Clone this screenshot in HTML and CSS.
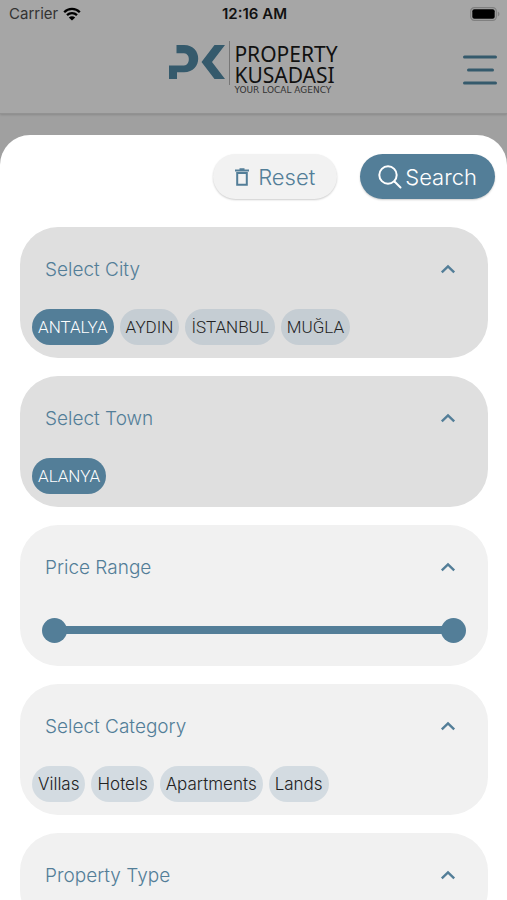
FILE: index.html
```html
<!DOCTYPE html>
<html lang="en">
<head>
<meta charset="utf-8">
<meta name="viewport" content="width=device-width, initial-scale=1">
<title>Property Kusadasi</title>
<link rel="stylesheet" href="styles.css">
</head>
<body>
<header class="top">
  <div class="status">
    <span class="carrier">Carrier
      <svg class="wifi" viewBox="0 0 18 14" aria-hidden="true"><path d="M1.2 5.2C5.500 .8 12.500 .8 16.800 5.200M4 8.200c2.900-2.800 7.100-2.800 10 0" fill="none" stroke="currentColor" stroke-width="2.300"/><path d="M9 13.600 5.800 10.400c1.800-1.700 4.600-1.700 6.400 0z" fill="currentColor"/></svg>
    </span>
    <span class="clock">12:16 AM</span>
    <svg class="battery" viewBox="0 0 30 14" aria-hidden="true"><rect x=".7" y=".7" width="25.600" height="12.600" rx="3.600" fill="none" stroke="#808080" stroke-width="1.200"/><rect x="2.300" y="2.300" width="22.400" height="9.400" rx="2" fill="#000"/><path d="M27.800 4.500v5c2.200-1 2.200-4 0-5z" fill="#808080"/></svg>
  </div>
  <div class="bar">
    <a class="logo" href="#">
      <svg class="mark" viewBox="0 0 56 36" aria-hidden="true"><path d="M7.500 1H15C34 1 34 28.300 15 28.300H8V35H0V21.500H15C21.500 21.500 21.500 9.300 15 9.300H7.500z"/><path d="M45.500 1H56L43 18l13 17H45.500L32.500 18z"/></svg>
      <span class="words">
        <span class="name">PROPERTY</span>
        <span class="name">KUSADASI</span>
        <span class="tag">YOUR LOCAL AGENCY</span>
      </span>
    </a>
    <button class="menu" aria-label="Menu"><svg viewBox="0 0 34 30" aria-hidden="true"><path d="M1.500 2h31M5.500 15h24M1.500 28h31"/></svg></button>
  </div>
</header>
<main class="sheet">
  <div class="actions">
    <button class="pill reset"><svg class="trash" viewBox="0 0 14 18" aria-hidden="true"><path d="M2.200 5v11.700h9.600V5zM0 2.500h14M4.500 1.200h5" /></svg>Reset</button>
    <button class="pill search"><svg class="lens" viewBox="0 0 24 24" aria-hidden="true"><circle cx="10" cy="10" r="8.700"/><path d="m16.500 16.500 6 6"/></svg>Search</button>
  </div>
  <section class="card chosen">
    <button class="head" aria-expanded="true">Select City<svg class="chevron" viewBox="0 0 16 10" aria-hidden="true"><path d="m1.800 8.300 6.200-6 6.200 6"/></svg></button>
    <div class="chips"><button class="chip on">ANTALYA</button><button class="chip">AYDIN</button><button class="chip">İSTANBUL</button><button class="chip">MUĞLA</button></div>
  </section>
  <section class="card chosen">
    <button class="head" aria-expanded="true">Select Town<svg class="chevron" viewBox="0 0 16 10" aria-hidden="true"><path d="m1.800 8.300 6.200-6 6.200 6"/></svg></button>
    <div class="chips"><button class="chip on">ALANYA</button></div>
  </section>
  <section class="card">
    <button class="head" aria-expanded="true">Price Range<svg class="chevron" viewBox="0 0 16 10" aria-hidden="true"><path d="m1.800 8.300 6.200-6 6.200 6"/></svg></button>
    <div class="range">
      <input type="range" min="0" max="100" value="0" aria-label="Minimum price">
      <input type="range" min="0" max="100" value="100" aria-label="Maximum price">
    </div>
  </section>
  <section class="card">
    <button class="head" aria-expanded="true">Select Category<svg class="chevron" viewBox="0 0 16 10" aria-hidden="true"><path d="m1.800 8.300 6.200-6 6.200 6"/></svg></button>
    <div class="chips"><button class="chip">Villas</button><button class="chip">Hotels</button><button class="chip">Apartments</button><button class="chip">Lands</button></div>
  </section>
  <section class="card">
    <button class="head" aria-expanded="true">Property Type<svg class="chevron" viewBox="0 0 16 10" aria-hidden="true"><path d="m1.800 8.300 6.200-6 6.200 6"/></svg></button>
  </section>
</main>
</body>
</html>
```
FILE: styles.css
```css
* { box-sizing: border-box; }

:root {
  --blue: #537e98;
  --deep: #355a6c;
}

body {
  margin: 0;
  height: 100vh;
  display: flex;
  flex-direction: column;
  overflow: hidden;
  background: #a0a0a0;
  font-family: Inter, "Liberation Sans", sans-serif;
  font-weight: 300;
}

button {
  font: inherit;
  border: 0;
  padding: 0;
  margin: 0;
  background: none;
  cursor: pointer;
}

svg { display: block; flex: none; }

.top {
  flex: none;
  background: #a6a6a6;
  border-bottom: 1px solid #929292;
  box-shadow: 0 1px 2px rgba(0, 0, 0, .15);
  margin-bottom: 21px;
}

.status {
  display: grid;
  grid-template-columns: 1fr auto 1fr;
  align-items: center;
  height: 27px;
  padding: 0 7px 0 9px;
  font-size: 15px;
  color: #111;
}

.carrier {
  display: flex;
  align-items: center;
  gap: 5px;
  font-weight: 400;
  color: #333;
}

.wifi { width: 18px; height: 14px; color: #000; }
.clock { font-weight: 600; }
.battery { width: 30px; height: 14px; justify-self: end; }

.bar {
  display: grid;
  grid-template-columns: 1fr auto 1fr;
  align-items: center;
  height: 86px;
  padding: 0 10px;
}

.logo {
  grid-column: 2;
  display: flex;
  align-items: flex-start;
  gap: 4px;
  padding-bottom: 5px;
  color: #111;
  text-decoration: none;
  font-family: "Noto Sans", sans-serif;
  font-weight: 400;
}

.mark { width: 56px; height: 36px; margin-top: 3px; fill: var(--deep); }

.words {
  display: flex;
  flex-direction: column;
  padding-left: 5px;
  background: linear-gradient(#777, #777) left top / 1px 44px no-repeat;
}

.name { font-size: 21px; line-height: 21px; }
.name:first-child { padding-top: 3px; }
.tag { font-family: "DejaVu Sans", sans-serif; font-size: 9px; line-height: 8px; color: #333; }

.menu { grid-column: 3; justify-self: end; }
.menu svg { width: 34px; height: 30px; fill: none; stroke: var(--deep); stroke-width: 3; stroke-linecap: round; }

.sheet {
  flex: 1;
  min-height: 0;
  display: flex;
  flex-direction: column;
  gap: 18px;
  overflow-y: auto;
  scrollbar-width: none;
  padding: 19px 19px 0 20px;
  border-radius: 30px 30px 0 0;
  background: #fff;
}

.actions {
  flex: none;
  display: flex;
  justify-content: flex-end;
  gap: 23px;
  margin: 0 -7px 10px 0;
}

.pill {
  display: flex;
  align-items: center;
  height: 45px;
  border-radius: 23px;
  font-size: 22px;
  box-shadow: 0 1px 2px rgba(0, 0, 0, .2);
}

.reset { gap: 9px; padding: 0 22px; background: #f2f2f2; color: var(--blue); }
.search { gap: 3px; padding: 0 18px; background: var(--blue); color: #fff; }
.trash { width: 14px; height: 18px; fill: none; stroke: var(--blue); stroke-width: 2; }
.lens { width: 24px; height: 24px; fill: none; stroke: #fff; stroke-width: 2; stroke-linecap: round; }

.card {
  flex: none;
  border-radius: 38px;
  background: #f1f1f1;
  padding-bottom: 13px;
}

.chosen { background: #dfdfdf; }

.head {
  display: flex;
  align-items: center;
  justify-content: space-between;
  width: 100%;
  height: 82px;
  padding: 2px 32px 0 25px;
  font-size: 19px;
  color: var(--blue);
}

.chevron { width: 16px; height: 10px; fill: none; stroke: var(--blue); stroke-width: 2.400; }

.chips { display: flex; flex-wrap: wrap; gap: 6px; padding: 0 12px; }

.chip {
  height: 36px;
  padding: 0 6px;
  border-radius: 18px;
  background: #d3dbe1;
  color: #222;
  font-size: 17px;
}

.chosen .chip { background: #c5cdd3; font-family: Roboto, sans-serif; }
.chosen .chip.on { background: var(--blue); color: #fff; }

.range {
  display: grid;
  height: 46px;
  padding: 0 22px;
  align-items: center;
  background: linear-gradient(var(--blue), var(--blue)) center / calc(100% - 70px) 8px no-repeat;
}

.range input {
  grid-area: 1 / 1;
  appearance: none;
  width: 100%;
  height: 25px;
  margin: 0;
  background: none;
  pointer-events: none;
}

.range input::-webkit-slider-thumb {
  appearance: none;
  width: 25px;
  height: 25px;
  border-radius: 50%;
  background: var(--blue);
  pointer-events: auto;
}
```
